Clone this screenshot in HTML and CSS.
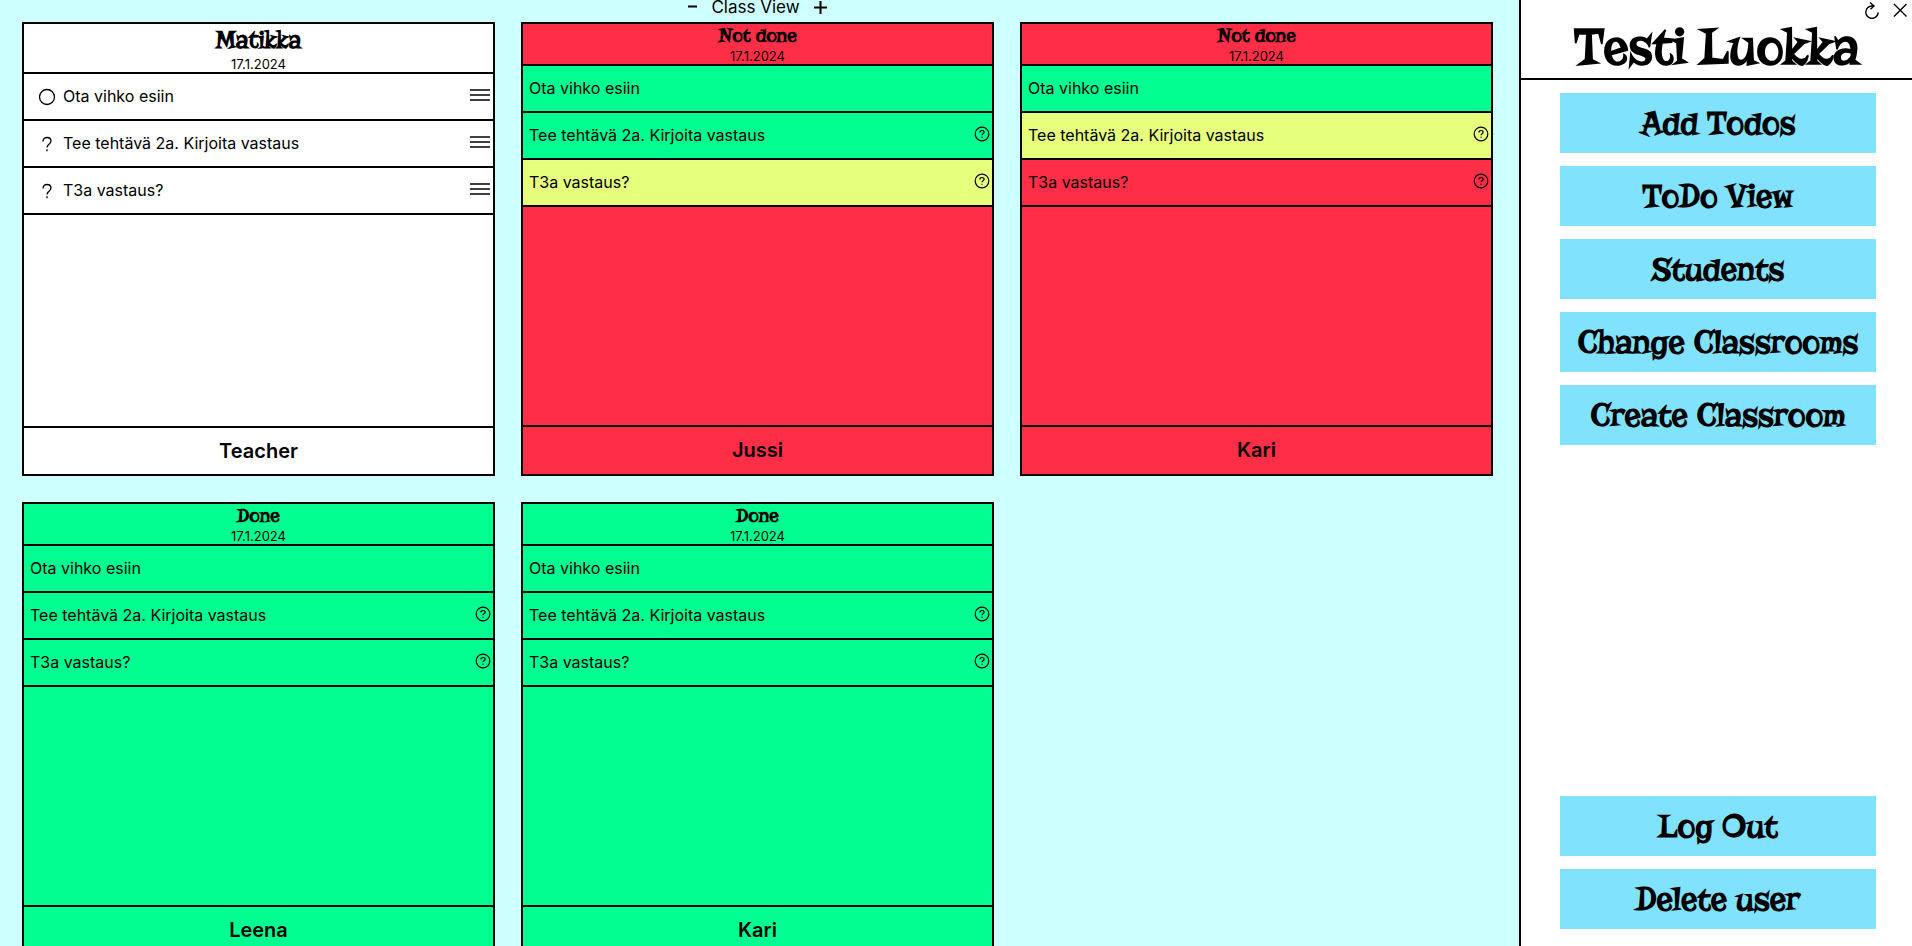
FILE: index.html
```html
<!DOCTYPE html>
<html lang="en">
<head>
<meta charset="utf-8">
<meta name="viewport" content="width=device-width, initial-scale=1">
<title>Testi Luokka</title>
<link rel="stylesheet" href="styles.css">
</head>
<body>
<svg class="sprite" aria-hidden="true">
  <symbol id="help" viewBox="0 0 16 16"><circle cx="8" cy="8" r="6.8"/><path d="M5.9 6.6C5.9 5.2 6.8 4.5 8 4.5s2.1.7 2.1 1.8c0 1.5-2.1 1.5-2.1 3M8 10.7v1.1"/></symbol>
  <symbol id="menu" viewBox="0 0 20 14"><path d="M0 2h20M0 7h20M0 12h20"/></symbol>
  <symbol id="question" viewBox="0 0 18 18"><path d="M5 6.500C5 3.800 6.800 2.500 9 2.500S13 3.900 13 6.100C13 9.200 9 9.200 9 12.500M9 14.300v2"/></symbol>
  <symbol id="circle" viewBox="0 0 18 18"><circle cx="9" cy="9" r="7.5"/></symbol>
</svg>
<div class="app">
  <main class="main">
    <div class="view-bar">
      <button class="zoom-btn" aria-label="Smaller"><svg class="zoom-icon" viewBox="0 0 14 14"><path d="M5 6.500h9"/></svg></button>
      <span class="view-name">Class View</span>
      <button class="zoom-btn" aria-label="Larger"><svg class="zoom-icon" viewBox="0 0 14 14"><path d="M0 7.500h13M6.500 1v13"/></svg></button>
    </div>
    <div class="cards">
      <section class="card teacher">
        <header class="card-head"><h2 class="card-title">Matikka</h2><span class="date">17.1.2024</span></header>
        <ul class="todos">
          <li class="todo"><svg class="kind"><use href="#circle"/></svg><span class="text">Ota vihko esiin</span><button class="icon-btn" aria-label="Menu"><svg class="menu"><use href="#menu"/></svg></button></li>
          <li class="todo"><svg class="kind"><use href="#question"/></svg><span class="text">Tee tehtävä 2a. Kirjoita vastaus</span><button class="icon-btn" aria-label="Menu"><svg class="menu"><use href="#menu"/></svg></button></li>
          <li class="todo"><svg class="kind"><use href="#question"/></svg><span class="text">T3a vastaus?</span><button class="icon-btn" aria-label="Menu"><svg class="menu"><use href="#menu"/></svg></button></li>
        </ul>
        <footer class="name">Teacher</footer>
      </section>
      <section class="card pending">
        <header class="card-head"><h2 class="card-title">Not done</h2><span class="date">17.1.2024</span></header>
        <ul class="todos">
          <li class="todo green"><span class="text">Ota vihko esiin</span></li>
          <li class="todo green"><span class="text">Tee tehtävä 2a. Kirjoita vastaus</span><button class="icon-btn" aria-label="Answer"><svg class="help"><use href="#help"/></svg></button></li>
          <li class="todo yellow"><span class="text">T3a vastaus?</span><button class="icon-btn" aria-label="Answer"><svg class="help"><use href="#help"/></svg></button></li>
        </ul>
        <footer class="name">Jussi</footer>
      </section>
      <section class="card pending">
        <header class="card-head"><h2 class="card-title">Not done</h2><span class="date">17.1.2024</span></header>
        <ul class="todos">
          <li class="todo green"><span class="text">Ota vihko esiin</span></li>
          <li class="todo yellow"><span class="text">Tee tehtävä 2a. Kirjoita vastaus</span><button class="icon-btn" aria-label="Answer"><svg class="help"><use href="#help"/></svg></button></li>
          <li class="todo"><span class="text">T3a vastaus?</span><button class="icon-btn" aria-label="Answer"><svg class="help"><use href="#help"/></svg></button></li>
        </ul>
        <footer class="name">Kari</footer>
      </section>
      <section class="card green">
        <header class="card-head"><h2 class="card-title">Done</h2><span class="date">17.1.2024</span></header>
        <ul class="todos">
          <li class="todo"><span class="text">Ota vihko esiin</span></li>
          <li class="todo"><span class="text">Tee tehtävä 2a. Kirjoita vastaus</span><button class="icon-btn" aria-label="Answer"><svg class="help"><use href="#help"/></svg></button></li>
          <li class="todo"><span class="text">T3a vastaus?</span><button class="icon-btn" aria-label="Answer"><svg class="help"><use href="#help"/></svg></button></li>
        </ul>
        <footer class="name">Leena</footer>
      </section>
      <section class="card green">
        <header class="card-head"><h2 class="card-title">Done</h2><span class="date">17.1.2024</span></header>
        <ul class="todos">
          <li class="todo"><span class="text">Ota vihko esiin</span></li>
          <li class="todo"><span class="text">Tee tehtävä 2a. Kirjoita vastaus</span><button class="icon-btn" aria-label="Answer"><svg class="help"><use href="#help"/></svg></button></li>
          <li class="todo"><span class="text">T3a vastaus?</span><button class="icon-btn" aria-label="Answer"><svg class="help"><use href="#help"/></svg></button></li>
        </ul>
        <footer class="name">Kari</footer>
      </section>
    </div>
  </main>
  <aside class="side">
    <header class="side-head">
      <div class="tools">
        <button class="icon-btn" aria-label="Refresh"><svg class="tool" viewBox="0 0 18 18"><path d="M9 5A6.200 6.200 0 1 0 15.200 11.200M7 1.500L11 5 7.500 8.300M8 5h3"/></svg></button>
        <button class="icon-btn" aria-label="Close"><svg class="tool" viewBox="0 0 18 18"><path d="M3 3l12.500 12.500M15.500 3L3 15.500"/></svg></button>
      </div>
      <h1 class="class-name">Testi Luokka</h1>
    </header>
    <nav class="nav">
      <button class="nav-btn">Add Todos</button>
      <button class="nav-btn">ToDo View</button>
      <button class="nav-btn">Students</button>
      <button class="nav-btn">Change Classrooms</button>
      <button class="nav-btn">Create Classroom</button>
      <button class="nav-btn account">Log Out</button>
      <button class="nav-btn">Delete user</button>
    </nav>
  </aside>
</div>
</body>
</html>
```
FILE: styles.css
```css
* { box-sizing: border-box; }
body { margin: 0; font-family: Inter, sans-serif; font-size: 16px; line-height: 20px; color: #000; background: #ceffff; }
button { font: inherit; color: inherit; background: none; border: 0; padding: 0; cursor: pointer; }
h1, h2, ul { margin: 0; padding: 0; list-style: none; }
svg { display: block; fill: none; stroke: #000; }
.sprite { position: absolute; width: 0; height: 0; }
.app { display: flex; height: 100vh; overflow: hidden; }

.main { flex: 1; padding: 0 26px 0 22px; overflow: hidden; }
.view-bar { display: flex; justify-content: center; align-items: flex-start; gap: 14px; height: 22px; padding-right: 4px; }
.zoom-icon { width: 14px; height: 14px; stroke-width: 2; }
.view-name { font-size: 17px; line-height: 14px; }
.cards { display: grid; grid-template-columns: repeat(3, minmax(0, 1fr)); grid-auto-rows: 454px; gap: 26px; }
.card { display: flex; flex-direction: column; border: 2px solid #000; }
.teacher { background: #fff; }
.pending { background: #ff2e47; }
.green { background: #00ff90; }
.yellow { background: #e6ff7d; }
.card-head { display: flex; flex-direction: column; align-items: center; border-bottom: 2px solid #000; }
.card-title { padding-bottom: 2px; font-family: Risque, "Liberation Serif", serif; font-size: 20px; line-height: 23px; font-weight: 700; }
.teacher .card-title { font-size: 25px; line-height: 31px; }
.date { font-size: 13px; line-height: 15px; }
.todos { flex: 1; }
.todo { display: flex; align-items: center; height: 47px; padding: 0 2px 0 6px; border-bottom: 2px solid #000; }
.teacher .todo { padding: 0 3px 0 14px; }
.text { flex: 1; padding-bottom: 1px; }
.kind { width: 18px; height: 18px; margin-right: 7px; stroke-width: 1.3; }
.icon-btn { padding-bottom: 3px; }
.menu { width: 20px; height: 14px; stroke-width: 1.6; }
.help { width: 16px; height: 16px; stroke-width: 1.2; }
.name { padding: 13px 0 14px; border-top: 2px solid #000; font-size: 20px; font-weight: 600; text-align: center; }
.teacher .name { padding-bottom: 13px; }

.side { display: flex; flex-direction: column; width: 393px; background: #fff; border-left: 2px solid #000; }
.side-head { border-bottom: 2px solid #000; }
.tools { display: flex; justify-content: flex-end; gap: 10px; height: 18px; padding: 1px 3px 0 0; }
.tool { width: 18px; height: 18px; stroke-width: 1.4; }
.class-name { padding-bottom: 2px; font-family: Risque, "Liberation Serif", serif; font-size: 52px; line-height: 58px; text-align: center; }
.nav { flex: 1; display: flex; flex-direction: column; gap: 13px; padding: 13px 36px 17px 39px; }
.nav-btn { height: 60px; background: #80e2fc; font-family: Risque, "Liberation Serif", serif; font-size: 34px; line-height: 40px; font-weight: 700; white-space: nowrap; }
.account { margin-top: auto; }
```
